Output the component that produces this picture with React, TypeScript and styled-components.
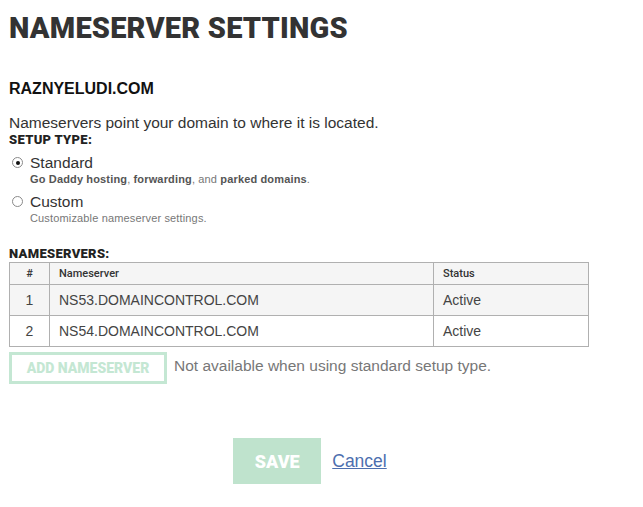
import React from "react";
import styled, { createGlobalStyle } from "styled-components";

const Global = createGlobalStyle`
  html, body { margin: 0; padding: 0; background: #fff; }
  body { font-family: "Liberation Sans", Arial, sans-serif; color: #333; }
`;

const Page = styled.div`
  padding: 12px 55px 0 9px;
  width: 579px;
`;

const Title = styled.h1`
  margin: 0;
  font-family: Roboto, "Liberation Sans", sans-serif;
  font-weight: 900;
  font-size: 29px;
  line-height: 32px;
  color: #333;
  letter-spacing: 0.2px;
`;

const Domain = styled.h2`
  margin: 36px 0 0;
  font-family: "Liberation Sans", Arial, sans-serif;
  font-weight: 700;
  font-size: 16px;
  line-height: 18px;
  color: #111;
`;

const Intro = styled.p`
  margin: 16px 0 0;
  font-size: 15.5px;
  line-height: 18px;
  color: #333;
`;

const Label = styled.div<{ $top?: number }>`
  margin-top: ${(p) => p.$top ?? 0}px;
  font-family: Roboto, "Liberation Sans", sans-serif;
  font-weight: 900;
  font-size: 13px;
  line-height: 15px;
  letter-spacing: 0.3px;
  color: #222;
`;

const Options = styled.div`
  display: flex;
  flex-direction: column;
  gap: 7px;
  margin-top: 7px;
`;

const Option = styled.label`
  display: grid;
  grid-template-columns: 21px 1fr;
  align-items: start;
`;

const Radio = styled.span<{ $checked?: boolean }>`
  width: 9px;
  height: 9px;
  margin: 3px 0 0 3px;
  border-radius: 50%;
  border: 1px solid #8a8a8a;
  background: #fff;
  position: relative;
  box-sizing: content-box;
  &::after {
    content: "";
    display: ${(p) => (p.$checked ? "block" : "none")};
    position: absolute;
    left: 2.5px;
    top: 2.5px;
    width: 4px;
    height: 4px;
    border-radius: 50%;
    background: #111;
  }
`;

const OptionTitle = styled.div`
  font-size: 15.5px;
  line-height: 18px;
  color: #333;
`;

const OptionDesc = styled.div`
  font-size: 11px;
  line-height: 14px;
  color: #777;
  letter-spacing: 0.15px;
  b { font-weight: 700; color: #555; }
`;

const Table = styled.table`
  margin-top: 1px;
  width: 580px;
  border-collapse: collapse;
  border: 1px solid #b0b0b0;
  font-size: 14px;
  color: #444;
`;

const Th = styled.th<{ $w?: number }>`
  width: ${(p) => (p.$w ? `${p.$w}px` : "auto")};
  height: 21px;
  padding: 0 9px;
  text-align: left;
  font-weight: 500;
  font-size: 11px;
  font-family: Roboto, "Liberation Sans", sans-serif;
  color: #333;
  background: #f5f5f5;
  border: 1px solid #b0b0b0;
  &:first-child { text-align: center; padding: 0; }
`;

const Tr = styled.tr<{ $shade?: boolean }>`
  background: ${(p) => (p.$shade ? "#f5f5f5" : "#fff")};
`;

const Td = styled.td`
  height: 30px;
  padding: 0 9px;
  border: 1px solid #b0b0b0;
  &:first-child { text-align: center; padding: 0; }
`;

const AddRow = styled.div`
  display: flex;
  align-items: center;
  gap: 7px;
  margin-top: 5px;
`;

const AddButton = styled.button`
  width: 158px;
  height: 32px;
  border: 3px solid #c4e7d3;
  background: #fff;
  color: #c4e7d3;
  font-family: Roboto, "Liberation Sans", sans-serif;
  font-weight: 900;
  font-size: 14px;
  padding: 0;
  cursor: default;
`;

const Note = styled.span`
  font-size: 15.5px;
  color: #777;
  margin-top: -4px;
`;

const Actions = styled.div`
  display: flex;
  align-items: center;
  justify-content: center;
  gap: 11px;
  margin-top: 54px;
  padding-left: 23px;
`;

const SaveButton = styled.button`
  width: 88px;
  height: 46px;
  border: none;
  background: #bfe3cd;
  color: #fff;
  font-family: Roboto, "Liberation Sans", sans-serif;
  font-weight: 900;
  font-size: 18px;
  padding: 0;
`;

const CancelLink = styled.a`
  font-size: 17.5px;
  color: #4d6faf;
  text-decoration: underline;
  cursor: pointer;
`;

const rows = [
  { n: 1, ns: "NS53.DOMAINCONTROL.COM", status: "Active" },
  { n: 2, ns: "NS54.DOMAINCONTROL.COM", status: "Active" },
];

export default function App() {
  return (
    <>
      <Global />
      <Page>
        <Title>NAMESERVER SETTINGS</Title>
        <Domain>RAZNYELUDI.COM</Domain>
        <Intro>Nameservers point your domain to where it is located.</Intro>
        <Label>SETUP TYPE:</Label>
        <Options>
          <Option>
            <Radio $checked />
            <div>
              <OptionTitle>Standard</OptionTitle>
              <OptionDesc>
                <b>Go Daddy hosting</b>, <b>forwarding</b>, and <b>parked domains</b>.
              </OptionDesc>
            </div>
          </Option>
          <Option>
            <Radio />
            <div>
              <OptionTitle>Custom</OptionTitle>
              <OptionDesc>Customizable nameserver settings.</OptionDesc>
            </div>
          </Option>
        </Options>
        <Label $top={21}>NAMESERVERS:</Label>
        <Table>
          <thead>
            <tr>
              <Th $w={39}>#</Th>
              <Th>Nameserver</Th>
              <Th $w={136}>Status</Th>
            </tr>
          </thead>
          <tbody>
            {rows.map((r, i) => (
              <Tr key={r.n} $shade={i % 2 === 0}>
                <Td>{r.n}</Td>
                <Td>{r.ns}</Td>
                <Td>{r.status}</Td>
              </Tr>
            ))}
          </tbody>
        </Table>
        <AddRow>
          <AddButton>ADD NAMESERVER</AddButton>
          <Note>Not available when using standard setup type.</Note>
        </AddRow>
        <Actions>
          <SaveButton>SAVE</SaveButton>
          <CancelLink>Cancel</CancelLink>
        </Actions>
      </Page>
    </>
  );
}
